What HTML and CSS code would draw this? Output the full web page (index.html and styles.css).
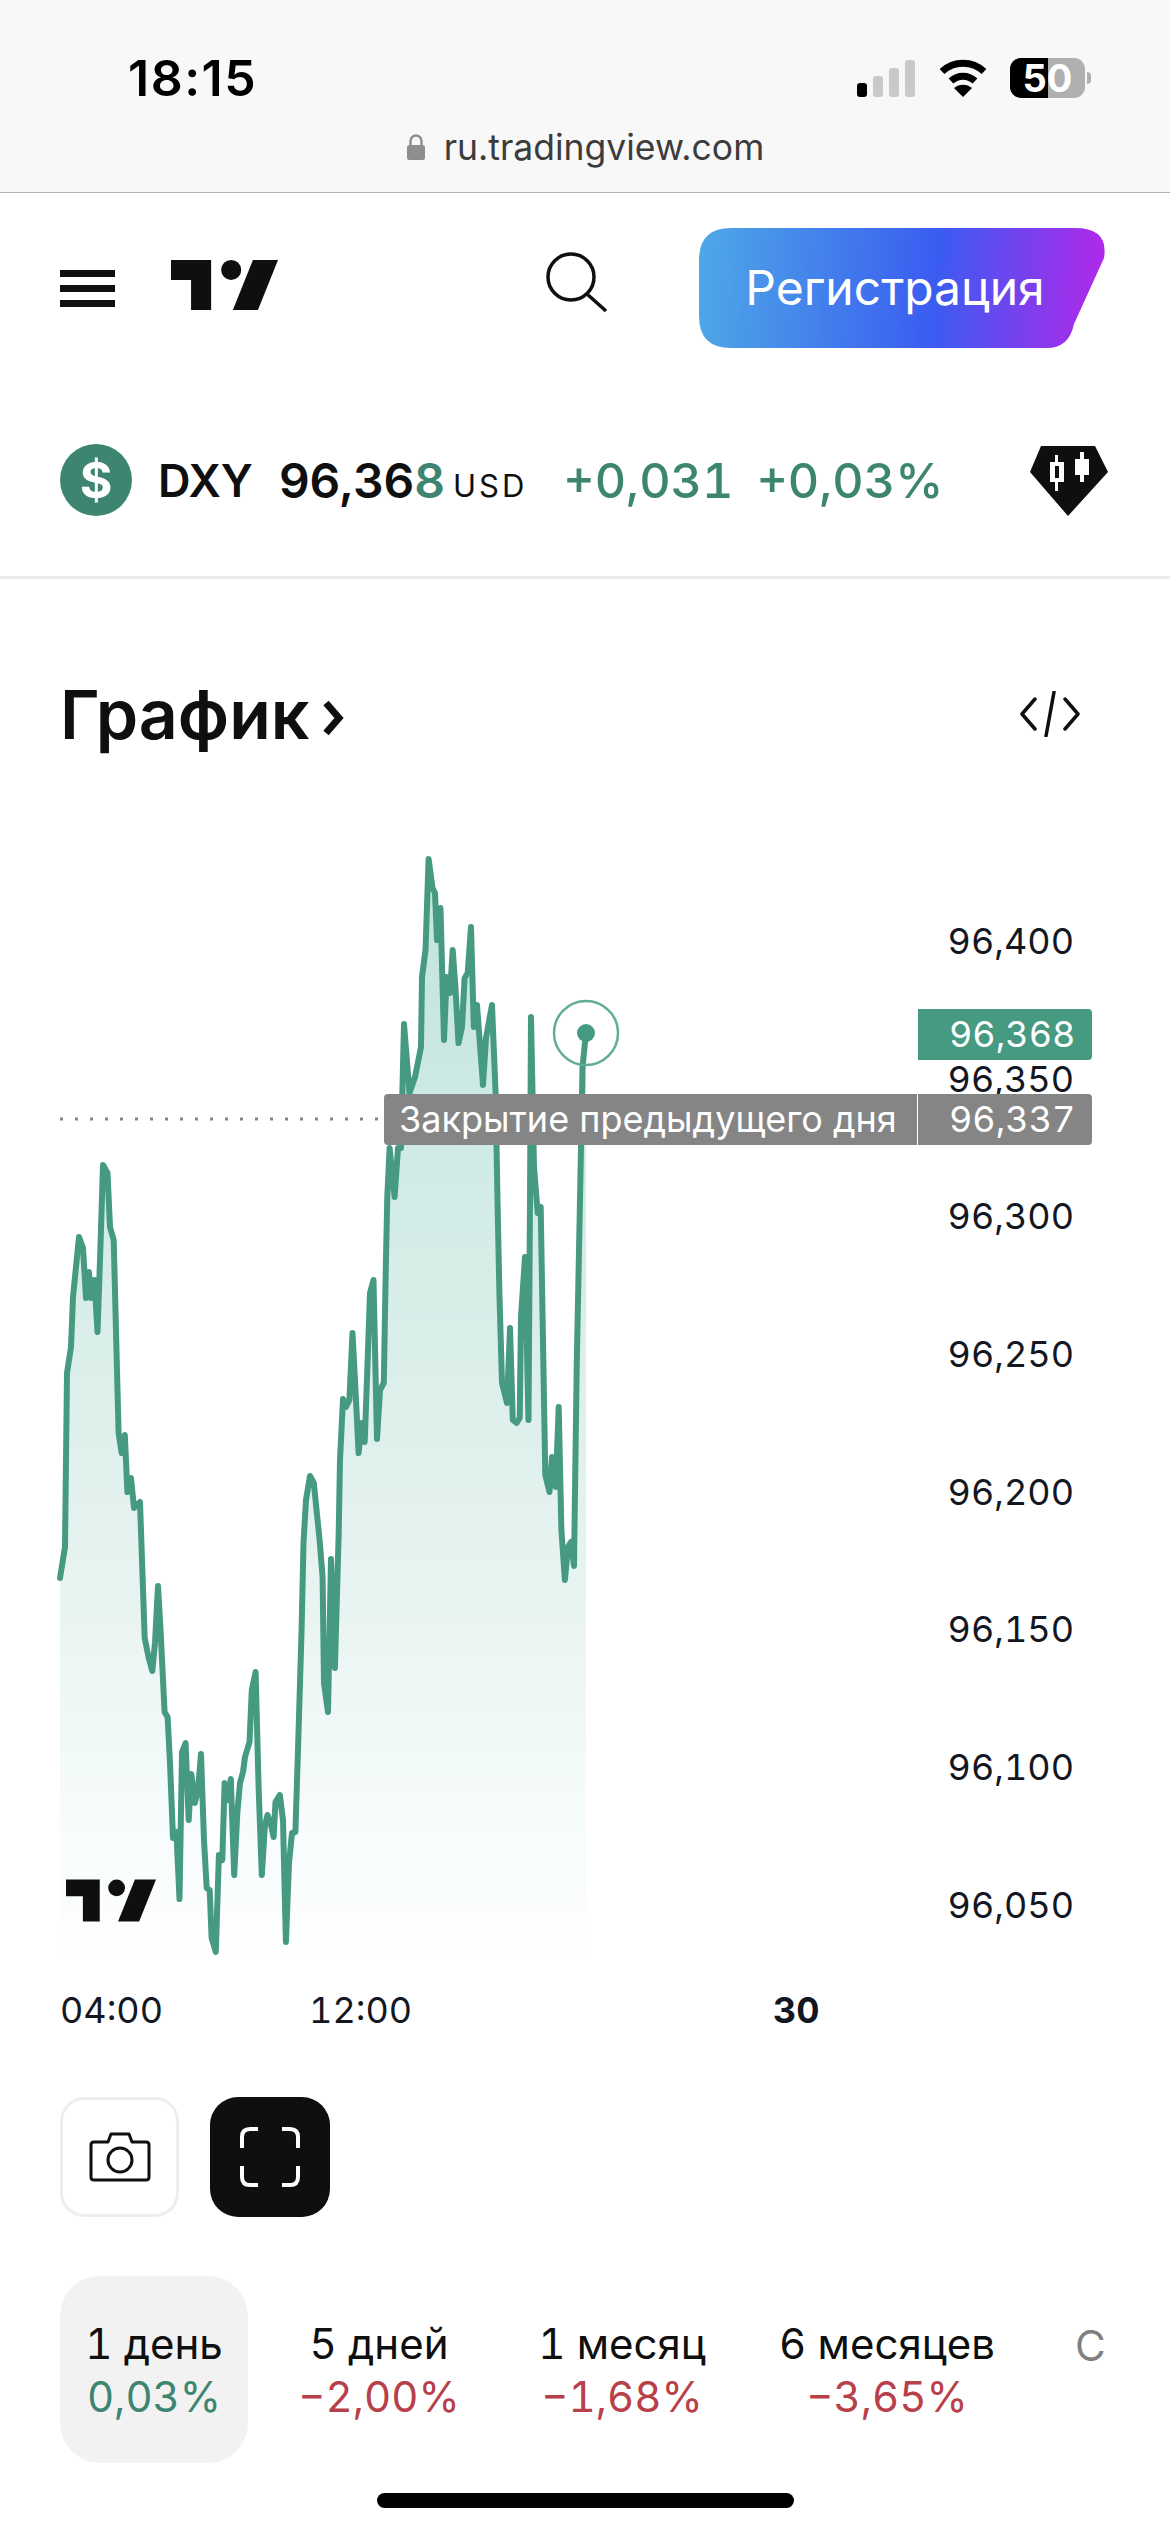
FILE: index.html
```html
<!DOCTYPE html>
<html lang="ru">
<head>
    <meta charset="UTF-8">
    <title>DXY — TradingView</title>
    <meta name="viewport" content="width=device-width, initial-scale=1">
    <link rel="stylesheet" href="styles.css">
</head>
<body>
<div class="browser-bar">
    <div class="status">
        <span class="time">18:15</span>
        <div class="status-icons">
            <div class="signal"><i class="on"></i><i></i><i></i><i></i></div>
            <svg class="wifi" width="50" height="38" viewBox="0 0 50 38">
                <path d="M4 12.5C16 1.5 34 1.5 46 12.5" fill="none" stroke="#000" stroke-width="7"/>
                <path d="M13 22C20 15.500 30 15.500 37 22" fill="none" stroke="#000" stroke-width="7"/>
                <path d="M16 29C21 24.500 29 24.500 34 29L25 38Z"/>
            </svg>
            <div class="battery">
                <span class="battery-num">50</span>
            </div>
            <i class="battery-tip"></i>
        </div>
    </div>
    <div class="url">
        <svg width="20" height="28" viewBox="0 0 20 28">
            <path d="M4.500 13V8a5.500 5.500 0 0 1 11 0v5" fill="none" stroke="#8e8e8e" stroke-width="2.500"/>
            <rect x="1" y="12" width="18" height="15" rx="2.500" fill="#8e8e8e"/>
        </svg>
        <span>ru.tradingview.com</span>
    </div>
</div>

<div class="nav">
    <div class="burger"><i></i><i></i><i></i></div>
    <svg class="logo" width="107" height="54" viewBox="2 6 32 15">
        <path d="M14 21H8v-9H2V6h12v15Zm14 0h-7.500l6-15H34l-6 15Z" fill="#0f0f0f"/>
        <circle cx="20" cy="9" r="3" fill="#0f0f0f"/>
    </svg>
    <svg class="search" width="62" height="62" viewBox="0 0 62 62">
        <circle cx="25" cy="26" r="23" fill="none" stroke="#0f0f0f" stroke-width="3.500"/>
        <path d="M41 43L60 60" stroke="#0f0f0f" stroke-width="3.500"/>
    </svg>
    <div class="signup">Регистрация</div>
</div>

<div class="symbol">
    <div class="symbol-icon">$</div>
    <span class="ticker">DXY</span>
    <span class="price">96,36<b>8</b></span>
    <span class="currency">USD</span>
    <span class="change">+0,031</span>
    <span class="change">+0,03%</span>
    <svg class="badge" width="78" height="70" viewBox="0 0 78 70">
        <path d="M11 0H65L78 26L38 70L0 26Z" fill="#0f0f0f"/>
        <path d="M28 9V16H34V36H28V45H25V36H20V16H25V9Z" fill="#fff"/>
        <rect x="25" y="20" width="4" height="12" fill="#0f0f0f"/>
        <path d="M50 6H54V13H59V29H54V36H50V29H45V13H50Z" fill="#fff"/>
    </svg>
</div>

<div class="section-head">
    <h2>График</h2>
    <svg class="chevron" width="24" height="36" viewBox="0 0 24 36">
        <path d="M4 3L17 18L4 33" fill="none" stroke="#0f0f0f" stroke-width="7"/>
    </svg>
    <svg class="embed" width="60" height="46" viewBox="0 0 60 46">
        <path d="M15 8L2 23L15 38M45 8L58 23L45 38M34 1L26 45" fill="none" stroke="#0f0f0f" stroke-width="3.500" stroke-linecap="round" stroke-linejoin="round"/>
    </svg>
</div>

<div class="chart">
    <svg class="plot" width="1170" height="1180" viewBox="0 800 1170 1180">
        <defs>
            <linearGradient id="areaFill" gradientUnits="userSpaceOnUse" x1="0" y1="860" x2="0" y2="1960">
                <stop offset="0" stop-color="#c0e4dc"/>
                <stop offset="0.67" stop-color="#e8f4f1"/>
                <stop offset="0.85" stop-color="#f5fbfb"/>
                <stop offset="1" stop-color="#ffffff"/>
            </linearGradient>
        </defs>
        <polygon fill="url(#areaFill)" points="60,1960 60,1578 65,1547 67,1373 71,1347 73,1297 79,1237 83,1248 86,1298 89,1272 91,1298 94.500,1280 97.500,1332 100,1260 103,1165 107.500,1173 110,1227 113.700,1240 118.600,1433 121.700,1453 124.800,1435 127.400,1492 131,1478 134,1508 140,1502 144.700,1638 148.500,1657 152.300,1671 155,1643 158,1586 160.700,1633 164.600,1712 167.600,1717 170,1763 173,1838 176.400,1832 179.500,1899 182,1752 185.600,1743 188.700,1820 191.300,1774 194.800,1803 198,1790 201,1754 204,1840 206.700,1888 209.700,1890 211.600,1938 215.800,1952 218.900,1855 222.300,1860 224.600,1783 227.700,1800 230.800,1779 234.200,1875 237.300,1813 240,1783 243,1772 245,1757 249.500,1742 251.800,1690 255.600,1672 258.700,1790 261.800,1875 264.800,1827 267.500,1815 270.600,1823 273.600,1837 275.500,1802 279.800,1795 283,1820 285.900,1942 289,1863 292,1833 295.400,1832 298.500,1733 301.500,1633 303.500,1543 306,1500 310,1476 313.800,1483 319.600,1540 322.600,1577 324,1683 328,1712 331,1559 334.900,1668 338.700,1533 340,1460 343,1399 346,1407 349.400,1400 352.500,1333 356,1400 358.600,1453 361.600,1423 364.700,1442 367.400,1367 370,1293 373.500,1280 377,1439 380,1390 383.800,1383 385.800,1267 387.300,1197 389.600,1148 394.600,1197 398,1148 401,1148 404,1024 409.500,1093 415,1077 421,1047 422,977 425.500,950 428.600,859 432.500,888 435,893 437,940 440.500,908 444,1040 446.600,977 450,993 452.700,950 455.400,987 458.500,1043 462,1027 464.600,978 467.700,973 471,927 473.800,1027 477,1005 483,1085 486,1038 492,1005 495.600,1093 497.500,1200 499.400,1293 502,1383 507,1403 510,1328 512.800,1420 516.600,1423 519.700,1418 521,1317 525,1257 528.500,1420 530,1200 531,1017 534,1167 537.700,1213 540.700,1207 544,1400 545.300,1475 549.500,1492 552,1457 555.700,1487 558.700,1407 561.400,1530 564.900,1580 568,1547 571,1542 574,1566 576.700,1367 580,1200 582.500,1067 586,1033 586,1960"/>
        <polyline class="line" points="60,1578 65,1547 67,1373 71,1347 73,1297 79,1237 83,1248 86,1298 89,1272 91,1298 94.500,1280 97.500,1332 100,1260 103,1165 107.500,1173 110,1227 113.700,1240 118.600,1433 121.700,1453 124.800,1435 127.400,1492 131,1478 134,1508 140,1502 144.700,1638 148.500,1657 152.300,1671 155,1643 158,1586 160.700,1633 164.600,1712 167.600,1717 170,1763 173,1838 176.400,1832 179.500,1899 182,1752 185.600,1743 188.700,1820 191.300,1774 194.800,1803 198,1790 201,1754 204,1840 206.700,1888 209.700,1890 211.600,1938 215.800,1952 218.900,1855 222.300,1860 224.600,1783 227.700,1800 230.800,1779 234.200,1875 237.300,1813 240,1783 243,1772 245,1757 249.500,1742 251.800,1690 255.600,1672 258.700,1790 261.800,1875 264.800,1827 267.500,1815 270.600,1823 273.600,1837 275.500,1802 279.800,1795 283,1820 285.900,1942 289,1863 292,1833 295.400,1832 298.500,1733 301.500,1633 303.500,1543 306,1500 310,1476 313.800,1483 319.600,1540 322.600,1577 324,1683 328,1712 331,1559 334.900,1668 338.700,1533 340,1460 343,1399 346,1407 349.400,1400 352.500,1333 356,1400 358.600,1453 361.600,1423 364.700,1442 367.400,1367 370,1293 373.500,1280 377,1439 380,1390 383.800,1383 385.800,1267 387.300,1197 389.600,1148 394.600,1197 398,1148 401,1148 404,1024 409.500,1093 415,1077 421,1047 422,977 425.500,950 428.600,859 432.500,888 435,893 437,940 440.500,908 444,1040 446.600,977 450,993 452.700,950 455.400,987 458.500,1043 462,1027 464.600,978 467.700,973 471,927 473.800,1027 477,1005 483,1085 486,1038 492,1005 495.600,1093 497.500,1200 499.400,1293 502,1383 507,1403 510,1328 512.800,1420 516.600,1423 519.700,1418 521,1317 525,1257 528.500,1420 530,1200 531,1017 534,1167 537.700,1213 540.700,1207 544,1400 545.300,1475 549.500,1492 552,1457 555.700,1487 558.700,1407 561.400,1530 564.900,1580 568,1547 571,1542 574,1566 576.700,1367 580,1200 582.500,1067 586,1033"/>
        <circle cx="586" cy="1033" r="9" fill="#469a82"/>
        <circle cx="586" cy="1033" r="32" fill="none" stroke="#62ad99" stroke-width="2.500"/>
        <line class="prev-close" x1="60" y1="1119" x2="384" y2="1119"/>
    </svg>
    <svg class="chart-logo" width="90" height="45" viewBox="2 6 32 15">
        <path d="M14 21H8v-9H2V6h12v15Zm14 0h-7.500l6-15H34l-6 15Z" fill="#0f0f0f"/>
        <circle cx="20" cy="9" r="3" fill="#0f0f0f"/>
    </svg>
    <div class="price-axis">
        <span>96,400</span>
        <span>96,350</span>
        <span>96,300</span>
        <span>96,250</span>
        <span>96,200</span>
        <span>96,150</span>
        <span>96,100</span>
        <span>96,050</span>
    </div>
    <div class="tag tag-last">96,368</div>
    <div class="tag-row">
        <div class="tag-title">Закрытие предыдущего дня</div>
        <div class="tag tag-prev">96,337</div>
    </div>
</div>

<div class="time-axis">
    <span class="t1">04:00</span>
    <span class="t2">12:00</span>
    <b class="t3">30</b>
</div>

<div class="tools">
    <div class="tool">
        <svg width="62" height="50" viewBox="0 0 62 50">
            <path d="M5 10H19L22 2H40L43 10H57Q60 10 60 13V45Q60 48 57 48H5Q2 48 2 45V13Q2 10 5 10Z" fill="none" stroke="#0f0f0f" stroke-width="3" stroke-linejoin="round"/>
            <circle cx="31" cy="28" r="12" fill="none" stroke="#0f0f0f" stroke-width="3"/>
        </svg>
    </div>
    <div class="tool tool-dark">
        <svg width="60" height="60" viewBox="0 0 60 60">
            <path d="M18 2H10Q2 2 2 10V21M42 2H50Q58 2 58 10V21M18 58H10Q2 58 2 50V39M42 58H50Q58 58 58 50V39" fill="none" stroke="#fff" stroke-width="4"/>
        </svg>
    </div>
</div>

<div class="ranges">
    <div class="range active"><span>1 день</span><span class="up">0,03%</span></div>
    <div class="range"><span>5 дней</span><span class="down">−2,00%</span></div>
    <div class="range"><span>1 месяц</span><span class="down">−1,68%</span></div>
    <div class="range"><span>6 месяцев</span><span class="down">−3,65%</span></div>
    <div class="range range-cut"><span>С</span></div>
</div>

<div class="home-bar"></div>
</body>
</html>
```
FILE: styles.css
```css
html, body { margin: 0; padding: 0; }
body { width: 1170px; height: 2532px; overflow: hidden; background: #fff; color: #0f0f0f; font-family: Inter, "Noto Sans", sans-serif; }
i { display: block; }

.browser-bar { height: 192px; background: #f8f8f8; border-bottom: 1px solid #b2b2b2; }
.status { display: flex; justify-content: space-between; align-items: center; height: 104px; padding: 52px 79px 0 128px; box-sizing: border-box; }
.time { font-size: 50px; font-weight: 600; color: #000; letter-spacing: 1.500px; }
.status-icons { display: flex; align-items: center; }
.signal { display: flex; align-items: flex-end; gap: 6px; height: 37px; margin-right: 23px; }
.signal i { width: 10px; border-radius: 3px; background: #c9c9c9; }
.signal i:nth-child(1) { height: 14px; background: #000; }
.signal i:nth-child(2) { height: 21px; }
.signal i:nth-child(3) { height: 29px; }
.signal i:nth-child(4) { height: 37px; }
.wifi { margin-right: 22px; }
.battery { width: 75px; height: 40px; border-radius: 11px; background: linear-gradient(90deg, #000 50.500%, #b0b0b0 50.500%); display: flex; align-items: center; justify-content: center; }
.battery-num { color: #fff; font-size: 38px; font-weight: 700; }
.battery-tip { width: 4px; height: 12px; margin-left: 2px; background: #b0b0b0; border-radius: 0 4px 4px 0; }
.url { display: flex; justify-content: center; align-items: center; gap: 18px; font-size: 35.500px; color: #3c3c3c; height: 48px; margin-top: 19px; }

.nav { display: flex; align-items: center; height: 120px; margin-top: 35px; padding-left: 60px; }
.burger { width: 55px; display: flex; flex-direction: column; gap: 8px; margin-right: 56px; }
.burger i { height: 7px; background: #0f0f0f; }
.logo { margin-bottom: 6px; }
.search { margin-left: 268px; margin-right: 91px; margin-bottom: 12px; }
.signup { width: 406px; height: 120px; line-height: 120px; text-align: center; padding-right: 14px; box-sizing: border-box; color: #fff; font-size: 48px; background: linear-gradient(94deg, #4ea9e6 0%, #3a5cf1 58%, #b526ea 100%); clip-path: path("M32 0H376Q410 0 405 30L375 96Q370 120 348 120H32Q0 120 0 88V32Q0 0 32 0Z"); }

.symbol { display: flex; align-items: center; height: 72px; margin-top: 96px; padding: 0 62px 60px 60px; border-bottom: 3px solid #ebebeb; }
.symbol-icon { width: 72px; height: 72px; border-radius: 50%; background: #3d8570; color: #fff; font-size: 50px; font-weight: 700; line-height: 72px; text-align: center; margin-right: 26px; }
.ticker { font-size: 45px; font-weight: 600; margin-right: 26px; }
.price { font-size: 48px; font-weight: 600; margin-right: 8px; }
.price b { font-weight: 600; color: #3d8570; }
.currency { font-size: 31px; letter-spacing: 3px; margin-right: 36px; align-self: flex-end; margin-bottom: 12px; }
.change { font-size: 48.500px; font-weight: 500; color: #3d8570; margin-right: 23px; font-variant-numeric: tabular-nums; }
.badge { margin-left: auto; margin-top: 2px; }

.section-head { display: flex; align-items: center; height: 221px; padding: 48px 90px 0 60px; box-sizing: border-box; }
h2 { margin: 0 12px 0 0; font-size: 68px; font-weight: 600; }
.chevron { margin-top: 8px; }
.embed { margin-left: auto; }

.chart { position: relative; height: 1180px; }
.plot { display: block; }
.line { fill: none; stroke: #469a82; stroke-width: 6; stroke-linejoin: round; stroke-linecap: round; }
.prev-close { stroke: #858585; stroke-width: 3; stroke-dasharray: 3 12; }
.chart-logo { position: absolute; left: 66px; top: 1078px; }
.price-axis { position: absolute; right: 96px; top: 103px; display: flex; flex-direction: column; font-size: 36px; color: #131722; font-variant-numeric: tabular-nums; }
.price-axis span { height: 137.700px; line-height: 76px; }
.tag { position: absolute; left: 918px; width: 174px; height: 51px; line-height: 50px; box-sizing: border-box; padding-left: 31px; color: #fff; font-size: 36px; border-radius: 0 4px 4px 0; font-variant-numeric: tabular-nums; }
.tag-last { top: 209px; background: #469a82; }
.tag-prev { position: static; background: #858585; }
.tag-row { position: absolute; left: 384px; top: 294px; display: flex; gap: 1px; }
.tag-title { width: 533px; height: 51px; line-height: 50px; box-sizing: border-box; padding-left: 15px; background: #858585; color: #fff; font-size: 36px; border-radius: 4px 0 0 4px; white-space: nowrap; }

.time-axis { display: flex; height: 117px; padding-left: 60px; font-size: 36px; color: #131722; padding-top: 8px; box-sizing: border-box; font-variant-numeric: tabular-nums; }
.t2 { margin-left: 146px; }
.t3 { margin-left: 361px; font-weight: 700; }

.tools { display: flex; gap: 31px; padding-left: 60px; }
.tool { width: 119px; height: 120px; border: 3px solid #eee; border-radius: 24px; box-sizing: border-box; display: flex; align-items: center; justify-content: center; }
.tool-dark { width: 120px; background: #0f0f0f; border: none; border-radius: 28px; }

.ranges { display: flex; margin-top: 59px; padding-left: 60px; height: 187px; }
.range { display: flex; flex-direction: column; align-items: center; justify-content: center; gap: 2px; font-size: 42px; white-space: nowrap; box-sizing: border-box; font-variant-numeric: tabular-nums; }
.range:nth-child(1) { width: 188px; }
.range:nth-child(2) { width: 262px; }
.range:nth-child(3) { width: 224px; }
.range:nth-child(4) { width: 306px; }
.active { background: #f2f2f2; border-radius: 40px; }
.up { color: #3d8570; }
.down { color: #b8404a; }
.range-cut { align-items: flex-start; justify-content: flex-start; padding: 44px 0 0 35px; color: #808080; }

.home-bar { width: 417px; height: 15px; margin: 30px auto 0; border-radius: 8px; background: #000; }
```
